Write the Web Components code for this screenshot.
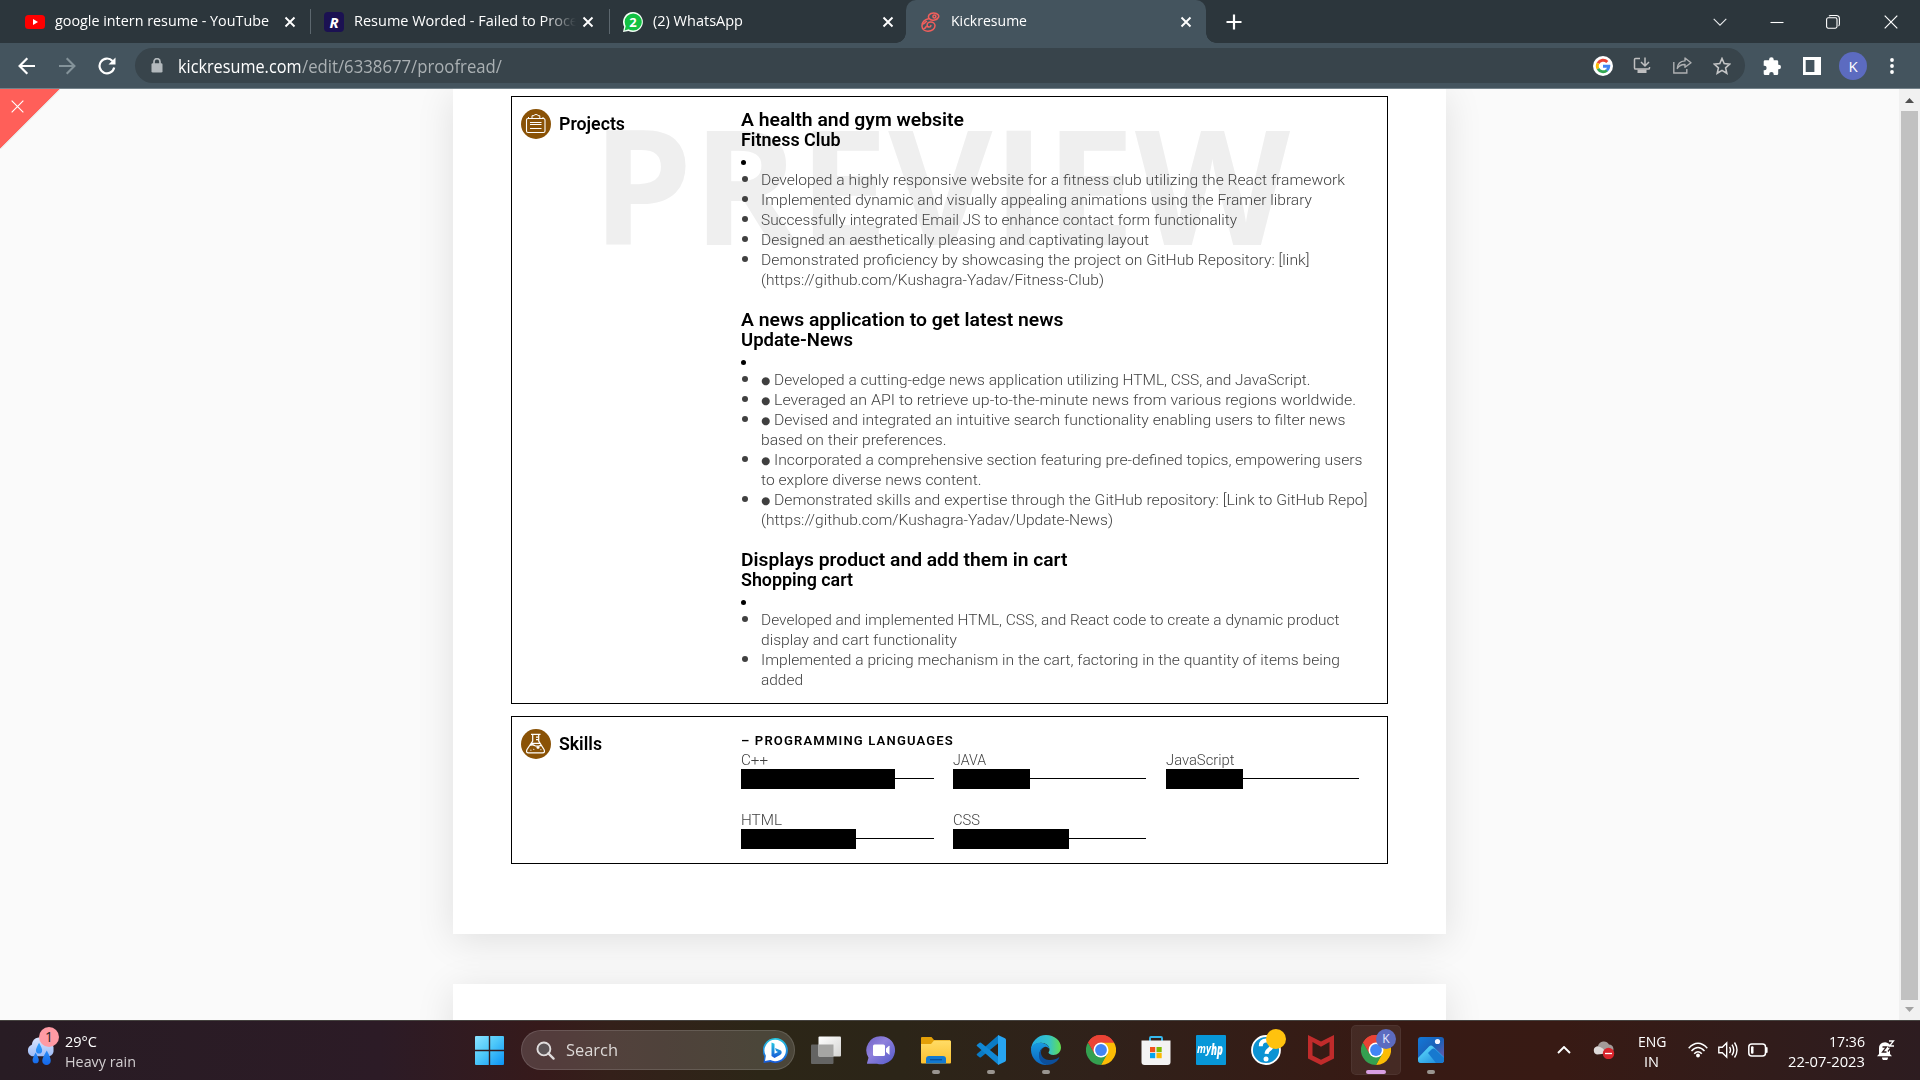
<!DOCTYPE html>
<html lang="en">
<head>
<meta charset="utf-8">
<title>Kickresume</title>
<style>
html,body{margin:0;height:100%;overflow:hidden}
body{display:flex;flex-direction:column;width:1920px;height:1080px;font-family:"Open Sans","Noto Sans",sans-serif;background:#fafafa}
</style>
</head>
<body>
<tab-strip></tab-strip>
<nav-toolbar></nav-toolbar>
<page-view></page-view>
<task-bar></task-bar>
<script>
const chromeLogo = `<path d="M15 15 2 7.500A15 15 0 0 1 28 7.500Z" fill="#ea4335"/><path d="M28 7.500A15 15 0 0 1 15 30L21 18 15 7.500Z" fill="#fbbc05"/><path d="M2 7.500A15 15 0 0 0 15 30L21.500 18.700 9 19Z" fill="#34a050"/><path d="M15 7.500h13A15 15 0 0 0 2 7.500L8.500 18.700Z" fill="#ea4335"/><circle cx="15" cy="15" r="7.500" fill="#fff"/><circle cx="15" cy="15" r="5.900" fill="#4285f4"/>`;
const ICONS = {
  x: ['0 0 12 12','<path d="M1.500 1.500l9 9M10.500 1.500l-9 9" stroke="#fff" stroke-width="1.900" fill="none"/>'],
  thinx: ['0 0 14 14','<path d="M.7.700l12.600 12.600M13.300.700.700 13.300" stroke="#fff" stroke-width="1.200" fill="none"/>'],
  youtube: ['0 0 20 20','<rect y="3" width="20" height="14" rx="3.500" fill="#f00"/><path d="M8 7v6l5-3z" fill="#fff"/>'],
  whatsapp: ['0 0 20 20','<path d="M10 0a10 10 0 1 1-4.500 19L0 20l1.200-5.200A10 10 0 0 1 10 0z" fill="#f4fff6"/><circle cx="10.200" cy="10" r="8.600" fill="#12c143"/><path d="M1.600 18.400l1.300-5 3.500 3.500z" fill="#12c143"/>'],
  kick: ['0 0 20 20','<g fill="none" stroke="#f25f5c" stroke-width="1.500" stroke-linecap="round"><path d="M16.500 6.500C19.500 4 16.500.800 12.500.900 8.500 1 6.500 4 8 6.500 2 8 .800 11.500 1 14.500c.2 3 3 4.700 6 4.700 4 0 7-2.500 7-5.400 0-2.400-2-3.900-4.300-3.900-2 0-3.600 1.400-3.600 3 0 1.200.900 2.100 2 2.100s1.800-.7 1.800-1.600"/><path d="M8 6.500c1.500 1.600 3.500 1.900 5.500 1.400 2-.2 2.500-.6 3-1.400M1.500 12c2 0 2.500-2 4-2.500M3 16.500c1.500-.2 2-1 2.200-2"/><circle cx="13.400" cy="4.400" r="1.500"/></g>'],
  plus: ['0 0 16 16','<path d="M8 .5v15M.5 8h15" stroke="#fff" stroke-width="2.200"/>'],
  chevdown: ['0 0 14 8','<path d="M.7.800 7 7.100 13.300.800" stroke="#e8eaec" stroke-width="1.100" fill="none"/>'],
  min: ['0 0 14 14','<path d="M.5 7.500h13" stroke="#fff" stroke-width="1.100"/>'],
  restore: ['0 0 14 14','<rect x=".6" y="2.800" width="10.400" height="10.400" rx="1.600" fill="none" stroke="#fff" stroke-width="1.100"/><path d="M3 1.200Q3.600.500 5 .5h5.200Q13.400.600 13.400 3.700V9q0 1.600-.9 2" fill="none" stroke="#fff" stroke-width="1.100"/>'],
  back: ['0 0 18 18','<path d="M17 9H2M9.300 1.300 1.600 9l7.700 7.700" fill="none" stroke="#fff" stroke-width="2.200"/>'],
  fwd: ['0 0 18 18','<path d="M1 9h15M8.700 1.300 16.400 9l-7.700 7.700" fill="none" stroke="#84939a" stroke-width="2.100"/>'],
  reload: ['0 0 18 18','<path d="M16.200 10.500A7.400 7.400 0 1 1 14.500 4" fill="none" stroke="#fff" stroke-width="2.200"/><path d="M17.500.600V7.500h-7z" fill="#fff"/>'],
  lock: ['0 0 12 15','<rect x=".5" y="5.300" width="11" height="9.200" rx="1.300" fill="#b3b9bd"/><path d="M3 6V3.700a3 3 0 0 1 6 0V6" stroke="#b3b9bd" stroke-width="1.700" fill="none"/>'],
  google: ['0 0 20 20','<circle cx="10" cy="10" r="10" fill="#fff"/><g fill="none" stroke-width="2.900"><path d="M5 7.200A5.800 5.800 0 0 1 14.300 6" stroke="#ea4335"/><path d="M5 12.800a5.800 5.800 0 0 1 0-5.600" stroke="#fbbc05"/><path d="M14 14.200a5.800 5.800 0 0 1-9-1.400" stroke="#34a853"/><path d="M10 10.200h5.800a5.800 5.800 0 0 1-2 4.200" stroke="#4285f4"/></g>'],
  install: ['0 0 18 18','<path d="M7 1.500H2.600Q1.500 1.500 1.500 2.600v8.300Q1.500 12 2.600 12h12.800q1.100 0 1.100-1.100V10" fill="none" stroke="#bfbfc0" stroke-width="1.500"/><path d="M4.500 12.500h9V16h-9z" fill="#bfbfc0"/><path d="M12 .5v8M8 5l4 4 4-4" fill="none" stroke="#bfbfc0" stroke-width="1.500"/>'],
  share: ['0 0 19 17','<path d="M.8 5v11h13v-4" fill="none" stroke="#aeb0b2" stroke-width="1.400"/><path d="M12 1l6 4.700-6 4.600V7.500C8 7.300 6 8.700 4.300 11.500 4.600 6.500 7.500 4.200 12 3.900z" fill="none" stroke="#aeb0b2" stroke-width="1.400" stroke-linejoin="round"/>'],
  star: ['0 0 18 18','<path d="M9 1.500l2.200 5.100 5.600.5-4.200 3.700 1.200 5.500L9 13.400l-4.800 2.900 1.200-5.500L1.200 7.100l5.600-.5z" fill="none" stroke="#c4c5c6" stroke-width="1.600"/>'],
  puzzle: ['0 0 18 18','<path d="M6.100 3.300V2.500a2.300 2.300 0 0 1 4.600 0v.8h3.200q1.300 0 1.300 1.300v3.200h.6a2.200 2.200 0 0 1 0 4.400h-.6v4.500q0 1.300-1.300 1.300h-3.200v-.8a2.200 2.200 0 0 0-4.500 0v.8H2q-1.300 0-1.300-1.300v-3.400h.7a2.200 2.200 0 0 0 0-4.500H.7V4.600Q.7 3.300 2 3.300z" fill="#fff"/>'],
  panel: ['0 0 18 18','<path d="M0 0h18v18H0zM2.700 2.900v12.200h8.700V2.900z" fill="#fff" fill-rule="evenodd"/>'],
  kebab: ['0 0 4 16','<circle cx="2" cy="2" r="1.900" fill="#fff"/><circle cx="2" cy="8" r="1.900" fill="#fff"/><circle cx="2" cy="14" r="1.900" fill="#fff"/>'],
  case: ['0 0 30 30','<circle cx="15" cy="15" r="15" fill="#8a5206"/><g fill="none" stroke="#fff" stroke-width="1.100"><rect x="5.500" y="9.500" width="18.500" height="14" rx="1.500"/><path d="M7.500 9V8M22 9V8M11 9V6.700h2q0-1.200 2-1.200t2 1.200h1.800V9M9 13.500h11.500M9 15.500h11.500M9 19.500h11.500" stroke-width="1"/></g>'],
  flask: ['0 0 30 30','<circle cx="15" cy="15" r="15" fill="#8a5206"/><path d="M10 5.400h9.500M11.700 5.500v6.500L6 20.500q-1.500 3.300 1.500 3.300h14q3 0 1.500-3.300L17.700 12V5.500M15 8h2.500M15 10.500h2.500M10 14.300h9.500M8.500 16.500q3-1.500 5 0t6.500-.2M13 20l-.5.700M17 17v3M15.500 18.500h3M10.300 21.300l-.8-.1M19.500 20.500h.8" fill="none" stroke="#fff" stroke-width="1.250"/>'],
  weather: ['0 0 32 30','<defs><linearGradient id="c" x2="0" y2="1"><stop stop-color="#dbe6ff"/><stop offset="1" stop-color="#9dbcf7"/></linearGradient><linearGradient id="d" x2="0" y2="1"><stop stop-color="#35a3ff"/><stop offset="1" stop-color="#1567ea"/></linearGradient></defs><path d="M7 21a6.500 6.500 0 0 1 0-12A8.500 8.500 0 0 1 23 6a7 7 0 0 1 6.500 8.500A5.800 5.800 0 0 1 25 21z" fill="url(#c)"/><path d="M14.500 7q-3.500 6.500-3.200 8a3.200 3.200 0 0 0 6.400 0q.3-1.500-3.200-8zM11 17q-3.500 6.500-3.200 8a3.200 3.200 0 0 0 6.400 0q.3-1.500-3.200-8zM22.500 15q-5 8.500-4.700 10.500a4.400 4.400 0 0 0 8.800 0Q27 23.500 22.500 15z" fill="url(#d)"/>'],
  windows: ['0 0 29 29','<defs><linearGradient id="w" x2="1" y2="1"><stop stop-color="#8ce3ff"/><stop offset=".45" stop-color="#4fc9fa"/><stop offset="1" stop-color="#0b93f5"/></linearGradient></defs><path d="M1 0h12.800v13.800H0V1Q0 0 1 0zM15.200 0H28q1 0 1 1v12.800H15.200zM0 15.200h13.800V29H1q-1 0-1-1zM15.200 15.200H29V28q0 1-1 1H15.200z" fill="url(#w)"/>'],
  mag: ['0 0 20 20','<circle cx="8.300" cy="8.300" r="6.800" fill="#5c5557" stroke="#e0dddd" stroke-width="2"/><path d="M13 13l5.500 5.500" stroke="#e0dddd" stroke-width="2.400" stroke-linecap="round"/>'],
  bing: ['0 0 25 25','<defs><linearGradient id="b" x2="0" y2="1"><stop stop-color="#25c6df"/><stop offset="1" stop-color="#1758d8"/></linearGradient></defs><path d="M12.500 0a12.500 12.500 0 1 1-5 24L.5 25l.8-6.500A12.500 12.500 0 0 1 12.500 0z" fill="url(#b)"/><path d="M12.500 1.800A10.700 10.700 0 1 1 7.300 22L2 23l.9-5.200A10.700 10.700 0 0 1 12.500 1.800z" fill="#fff"/><path d="M8.500 4.500l3 1.200v10L15 14l-2-1-1-3 6 2.600q1.800 2.500-1 4.500L11.500 20l-3-2z" fill="url(#b)"/>'],
  taskview: ['0 0 30 30','<defs><linearGradient id="a" x2="1" y2="1"><stop stop-color="#fff"/><stop offset="1" stop-color="#d4d4d2"/></linearGradient></defs><rect y="9.500" width="22.500" height="19.500" rx="1" fill="#646463"/><rect x="7.500" y="1.500" width="22.500" height="20" rx="1" fill="url(#a)"/><path d="M7.500 9.500h15v12h-15z" fill="#a5a5a3"/>'],
  chat: ['0 0 30 30','<defs><linearGradient id="t" x2="1" y2="1"><stop stop-color="#6e62c6"/><stop offset=".4" stop-color="#8f80dc"/><stop offset="1" stop-color="#5259c9"/></linearGradient></defs><path d="M15 1.300a14 14 0 1 1-4 27.400H1.700q-1 0-.6-1l1.400-5A14 14 0 0 1 15 1.300z" fill="url(#t)"/><rect x="7" y="9.500" width="12" height="11.500" rx="1.500" fill="#fff"/><path d="M20 13.500l3-2.700q.5-.3.500.4v8q0 .8-.5.400l-3-2.700z" fill="#fff"/>'],
  folder: ['0 0 30 30','<defs><linearGradient id="f" x2="0" y2="1"><stop stop-color="#ffdc66"/><stop offset="1" stop-color="#fbc02f"/></linearGradient></defs><path d="M1 2h9.500L13 5h16v6H0V3q0-1 1-1z" fill="#e3a008"/><path d="M0 9h10l3-3.500h16q1 0 1 1v21q0 1-1 1H1q-1 0-1-1z" fill="url(#f)"/><path d="M5 28.500V24q0-3 3-3h14q3 0 3 3v4.500z" fill="#1279cf"/><path d="M9 24.700h12" stroke="#08509a" stroke-width="1.300"/>'],
  vscode: ['0 0 30 30','<path d="M1.300 20.500l2.200 1.800q.8.400 1.500-.1L22.500 8V0L.9 19q-.8.700.4 1.500z" fill="#0a7bc5"/><path d="M1.300 9.500l2.200-1.800Q4.300 7.300 5 7.800L22.500 22v8L.9 11q-.8-.7.400-1.500z" fill="#1188d5"/><path d="M22 0l7 3.200q1 .5 1 1.800v20q0 1.300-1 1.800L22 30z" fill="#27a5f2"/>'],
  edge: ['0 0 30 30','<defs><linearGradient id="e" x2="1"><stop stop-color="#23aee5"/><stop offset=".6" stop-color="#35c3c8"/><stop offset="1" stop-color="#63e04e"/></linearGradient><linearGradient id="g" x2="0" y2="1"><stop stop-color="#189ae0"/><stop offset="1" stop-color="#0b66bf"/></linearGradient></defs><path d="M0 15A15 15 0 0 1 15 0c8.500 0 15 5.700 15 12.500 0 4.500-3.500 7.500-7.500 7.500-3.500 0-5-1.300-5-2.400 0-.7 1-1.200 1-3.100C18.500 11 15 7.800 10 7.800 5 7.800 1 11 0 15z" fill="url(#e)"/><path d="M0 15c0-5 4.500-7.200 9-7.200 5.500 0 9.500 3.200 9.500 6.700-1-2-3-3-5-2.500C10 13 7.500 17 9 22c1.200 4 4.500 7.300 8.500 7.800A15 15 0 0 1 0 15z" fill="url(#g)"/><path d="M13 12.200c-5.500 3.300-3.500 12 5 12.800 4 .3 7.500-.8 9.500-2.500.5-.4 1 .1.700.600C25.500 28 20.500 30 16.500 30 11 29.500 7.500 24.500 8 20c.3-3.500 2-6.500 5-7.800z" fill="#0c4f9b"/>'],
  chrome: ['0 0 30 30',chromeLogo],
  store: ['0 0 30 30','<path d="M9 6.500V3q0-1 1-1h10q1 0 1 1v3.500" fill="none" stroke="#36b9ee" stroke-width="1.900"/><path d="M.5 5.500h29V27q0 3-3 3h-23q-3 0-3-3z" fill="#f3f3f3"/><path d="M9 12h5.200v5.200H9z" fill="#f1511b"/><path d="M15.500 12h5.200v5.200h-5.200z" fill="#80bb03"/><path d="M9 18h5.200v5.200H9z" fill="#04a4ee"/><path d="M15.500 18h5.200v5.200h-5.200z" fill="#fbb901"/>'],
  blue: ['0 0 30 30','<rect width="30" height="30" rx="1" fill="#0797d8"/>'],
  help: ['0 0 30 30','<circle cx="15" cy="15" r="14" fill="#0c93d4" stroke="#fff" stroke-width="1.800"/><path d="M9.800 11.200q0-5.600 5.500-5.600 5.400 0 5.400 4.600 0 2.700-2.700 4.400-2.300 1.500-2.400 4.300" fill="none" stroke="#fff" stroke-width="4"/><circle cx="15" cy="24" r="2.500" fill="#fff"/>'],
  mcafee: ['0 0 30 30','<path d="M2 0l13 6.500L28 0v23.500L15 30 2 23.500zM6.500 7v13.500l8.500 4.300 8.500-4.300V7L15 11.800z" fill="#c02b2b" fill-rule="evenodd"/>'],
  photos: ['0 0 30 30','<defs><linearGradient id="p" x2="1" y2="1"><stop stop-color="#1379d8"/><stop offset=".5" stop-color="#1a60b8"/><stop offset="1" stop-color="#7b58a8"/></linearGradient><linearGradient id="q" x2="1" y2="1"><stop stop-color="#65e5ff"/><stop offset="1" stop-color="#1680d8"/></linearGradient></defs><rect x="2" y="2" width="26" height="26" rx="3" fill="url(#p)"/><path d="M2 23l11-11.500q2-2 4 0L28 22v3q0 3-3 3H5q-3 0-3-3z" fill="url(#q)"/><path d="M12 18l4-4q1.500-1 3 0l9 9v2q0 3-3 3h-5z" fill="#1779cf"/><circle cx="21.500" cy="6.500" r="2.600" fill="#f4f5ff"/>'],
  up: ['0 0 14 8','<path d="M1 7l6-6 6 6" fill="none" stroke="#fff" stroke-width="1.900"/>'],
  cloud: ['0 0 22 18','<path d="M4 13a4.500 4.500 0 0 1 1-8A6 6 0 0 1 16 3.500 4.500 4.500 0 0 1 18 12z" fill="#a29b99"/><path d="M4 13.500a4.200 4.200 0 0 1-.5-8Q9 4.500 14 12.500z" fill="#ded9d8"/><circle cx="15.500" cy="12.500" r="5.700" fill="#d9252d"/><path d="M12 12.500h7" stroke="#fff" stroke-width="1.300"/>'],
  wifi: ['0 0 20 16','<g fill="none" stroke="#fff" stroke-width="1.500"><path d="M.7 6.200Q10-3.500 19.300 6.200M3.500 9Q10 2 16.500 9M6.200 11.700q3.800-4 7.600 0"/></g><circle cx="10" cy="13.500" r="1.900" fill="#fff"/>'],
  volume: ['0 0 20 18','<g fill="none" stroke="#fff" stroke-width="1.400"><path d="M.8 6.200h3.500L8.700 2v14l-4.400-4.200H.8zM11.500 6q2 3 0 6M14 3.700q3.500 5.300 0 10.600M16.500 1.500q5 7.500 0 15"/></g>'],
  battery: ['0 0 20 14','<rect x=".8" y="1" width="16.700" height="12" rx="3" fill="none" stroke="#fff" stroke-width="1.500"/><rect x="3" y="3.300" width="2.500" height="7.400" rx="1" fill="#fff"/><path d="M18.700 5v4" stroke="#fff" stroke-width="1.800" stroke-linecap="round"/>'],
  bell: ['0 0 18 20','<path d="M2 14V8.500a6 6 0 0 1 10-4.700L13 5v9l2 2.300H0z" fill="#fff"/><path d="M5 17.500h6a3 3 0 0 1-6 0z" fill="#fff"/><path d="M5.500 7h4l-4 5h4M11 7h3.500L11 11.500" stroke="#2f1d1e" stroke-width="1.300" fill="none"/><path d="M12 1h4.500L12.500 6H17" stroke="#fff" stroke-width="1.300" fill="none"/>'],
  arrowup: ['0 0 9 5','<path d="M0 5 4.500 0 9 5z" fill="#505050"/>'],
  arrowdown: ['0 0 9 5','<path d="M0 0h9L4.500 5z" fill="#a3a3a3"/>']
};
class Base extends HTMLElement{
  connectedCallback(){ if(this.shadowRoot) return;
    this.attachShadow({mode:'open'}).innerHTML=this.view(); }
}
const a=(el,n,d='')=>el.getAttribute(n)??d;

customElements.define('ui-icon',class extends Base{
  view(){const [vb,body]=ICONS[a(this,'name')];const w=a(this,'w'),h=a(this,'h',w);
  return `<style>:host{display:block;flex:none;width:${w}px;height:${h}px}svg{display:block}</style><svg width="${w}" height="${h}" viewBox="${vb}">${body}</svg>`}
});

customElements.define('browser-tab',class extends Base{
  view(){return `<style>
  :host{display:flex;align-items:center;box-sizing:border-box;height:43px;position:relative;color:#fff;font-size:14.500px}
  .t{flex:1;margin-left:10px;overflow:hidden;line-height:42px;height:43px}
  :host([fade]) .t{-webkit-mask:linear-gradient(90deg,#000 190px,transparent 222px)}
  :host([on]){background:#44545e;border-radius:10px 10px 0 0}
  :host([on])::before,:host([on])::after{content:"";position:absolute;bottom:0;width:10px;height:10px}
  :host([on])::before{left:-10px;background:radial-gradient(circle at 0 0,transparent 9.500px,#44545e 10px)}
  :host([on])::after{right:-10px;background:radial-gradient(circle at 100% 0,transparent 9.500px,#44545e 10px)}
  </style><slot name="icon"></slot><div class="t"><slot></slot></div><ui-icon name="x" w="12"></ui-icon>`}
});

customElements.define('tab-strip',class extends Base{
  view(){return `<style>
  :host{display:flex;height:43px;flex:none;background:#2c363c;align-items:center}
  .sep{width:1px;height:25px;background:#5c676e}
  .r{width:20px;height:20px;border-radius:4px;background:#1b1152;color:#fff;font:italic 700 15px/20px "Open Sans",sans-serif;text-align:center}
  .wa{display:grid;width:20px;height:20px}.wa>*{grid-area:1/1}.wa b{color:#fff;font-size:13px;line-height:20px;text-align:center;z-index:1}
  .plus{margin-left:20px}
  .win{margin-left:auto;display:flex;align-items:center;height:37px;padding-right:22px}
  </style>
  <browser-tab style="width:310px;padding:0 14px 0 25px"><ui-icon slot="icon" name="youtube" w="20"></ui-icon><fit-text w="214">google intern resume - YouTube</fit-text></browser-tab><div class="sep"></div>
  <browser-tab fade style="width:298px;padding:0 15px 0 13px"><div slot="icon" class="r">R</div><fit-text w="224">Resume Worded - Failed to Proce</fit-text></browser-tab><div class="sep"></div>
  <browser-tab style="width:296px;padding:0 12px 0 13px"><div slot="icon" class="wa"><ui-icon name="whatsapp" w="20"></ui-icon><b>2</b></div><fit-text w="90">(2) WhatsApp</fit-text></browser-tab>
  <browser-tab on style="width:300px;padding:0 14px 0 15px"><ui-icon slot="icon" name="kick" w="20"></ui-icon><fit-text w="76">Kickresume</fit-text></browser-tab>
  <ui-icon class="plus" name="plus" w="16"></ui-icon>
  <div class="win"><ui-icon name="chevdown" w="14" h="8"></ui-icon><ui-icon name="min" w="14" style="margin-left:43px"></ui-icon><ui-icon name="restore" w="14" style="margin-left:42px"></ui-icon><ui-icon name="thinx" w="14" style="margin-left:44px"></ui-icon></div>`}
});

customElements.define('nav-toolbar',class extends Base{
  view(){return `<style>
  :host{display:flex;height:46px;flex:none;box-sizing:border-box;background:#44545e;border-bottom:1px solid #74828a;align-items:center;padding-left:18px}
  .nav{display:flex;gap:22px;width:117px}
  .box{width:1610px;height:35px;border-radius:18px;background:#38444b;display:flex;align-items:center;font-size:17.500px;color:#aab0b3;line-height:34px}
  .box>ui-icon:first-child{margin:0 15px 0 16px}
  .url{display:flex}.url b{font-weight:400;color:#fff}
  .acts{margin-left:auto;display:flex;align-items:center;padding-right:14px}
  .end{display:flex;align-items:center;margin-left:18px}
  .k{width:28px;height:28px;border-radius:50%;background:#5c6bc0;color:#fff;text-align:center;font-size:15px;line-height:28px;margin:0 23px 0 18px}
  </style>
  <div class="nav"><ui-icon name="back" w="18"></ui-icon><ui-icon name="fwd" w="18"></ui-icon><ui-icon name="reload" w="18"></ui-icon></div>
  <div class="box"><ui-icon name="lock" w="12" h="15"></ui-icon><div class="url"><b><fit-text w="123.500">kickresume.com</fit-text></b><fit-text w="200">/edit/6338677/proofread/</fit-text></div>
  <div class="acts"><ui-icon name="google" w="20"></ui-icon><ui-icon name="install" w="18" style="margin-left:20px"></ui-icon><ui-icon name="share" w="19" h="17" style="margin-left:22px"></ui-icon><ui-icon name="star" w="18" style="margin-left:21px"></ui-icon></div></div>
  <div class="end"><ui-icon name="puzzle" w="18"></ui-icon><ui-icon name="panel" w="18" style="margin-left:22px"></ui-icon><div class="k">K</div><ui-icon name="kebab" w="4" h="16"></ui-icon></div>`}
});

customElements.define('resume-card',class extends Base{
  view(){return `<style>
  :host{display:flex;box-sizing:border-box;width:877px;border:1px solid #000;position:relative;padding:13px 0 0 9px}
  .l{width:220px;display:flex;gap:8px;height:30px;align-items:center;flex:none;margin-top:-1px}
  .l b{font:600 17.500px/30px Roboto,sans-serif}
  .r{flex:1;position:relative}
  </style><slot name="mark"></slot><div class="l"><ui-icon name="${a(this,'icon')}" w="30"></ui-icon><b><fit-text w="${a(this,'w')}">${a(this,'label')}</fit-text></b></div><div class="r"><slot></slot></div>`}
});

customElements.define('resume-entry',class extends Base{
  view(){return `<style>
  :host{display:block;margin-bottom:20px;font-family:Roboto,sans-serif;line-height:20px}
  h3,h4{margin:0;height:20px;font-weight:600;color:#000}h3{font-size:18.500px}h4{font-size:17.500px}
  .d{height:20px;display:flex;align-items:center}.d i{width:5px;height:5px;border-radius:50%;background:#000;margin-top:5px}
  </style><h3><fit-text w="${a(this,'tw')}">${a(this,'title-text')}</fit-text></h3><h4><fit-text w="${a(this,'sw')}">${a(this,'sub')}</fit-text></h4><div class="d"><i></i></div><slot></slot>`}
});

customElements.define('resume-point',class extends Base{
  view(){const inner=this.hasAttribute('inner');
  return `<style>
  :host{display:flex;font:300 15.200px/20px Roroto,Roboto,sans-serif;color:#3f3f3f}
  i{width:6px;height:6px;border-radius:50%;background:#404040;margin:6px 13px 0 1px;flex:none}
  .x{display:flex;flex-direction:column}.row{display:flex;height:20px}
  .b{width:13px;font:17px/20px "DejaVu Sans",sans-serif;text-indent:0}
  .b span{display:inline-block;transform:scale(.62);transform-origin:0 58%;margin-left:0}
  </style><i></i><div class="x">${a(this,'lines').split('|').map((l,n)=>{const [t,w]=l.split('~');
    return `<div class="row">${inner&&!n?'<div class="b"><span>●</span></div>':''}<fit-text w="${w}">${t}</fit-text></div>`}).join('')}</div>`}
});

customElements.define('skill-meter',class extends Base{
  view(){return `<style>
  :host{display:block;width:192.500px;height:40px;font:300 15.200px/20px Roboto,sans-serif;color:#3f3f3f}
  .n{height:19px}.bar{height:20px;display:flex}
  .f{background:#000;width:${a(this,'level')}px}.t{flex:1;height:1px;background:#000;margin-top:9px}
  </style><div class="n"><fit-text w="${a(this,'w')}">${a(this,'name')}</fit-text></div><div class="bar"><div class="f"></div><div class="t"></div></div>`}
});

customElements.define('page-view',class extends Base{
  view(){return `<style>
  :host{display:flex;height:931px;flex:none;overflow:hidden;position:relative;background:#fafafa}
  .doc{flex:1;display:flex;flex-direction:column;align-items:center;gap:50px}
  .paper{width:993px;background:#fff;box-shadow:0 6px 36px rgba(0,0,0,.11);box-sizing:border-box;flex:none}
  .one{height:845px;padding:7px 0 0 58px;display:flex;flex-direction:column;gap:12px}
  .two{height:200px}
  .mark{position:absolute;left:80px;top:0;font:700 160px/218px "Open Sans",sans-serif;color:#efefef;margin-top:-23px;height:218px}
  .tri{position:absolute;left:0;top:0;width:60px;height:60px;background:linear-gradient(135deg,#ff5f59 0 49.300%,#e6e0df 50%,transparent 51.500%)}
  .tri ui-icon{margin:11px 0 0 11px}
  .grid{display:grid;grid-template-columns:192px 193px 192px;column-gap:20px;row-gap:20px}
  .pl{font:600 13.500px/20px Roboto,sans-serif;height:20px;margin-top:0}
  .sb{width:21px;background:#f1f1f1;display:flex;flex-direction:column;align-items:center;padding:9px 0 8px;box-sizing:border-box;justify-content:space-between}
  .th{width:17px;height:889px;background:#c1c1c1}
  resume-entry:last-of-type{margin-bottom:0}
  </style>
  <div class="doc"><div class="paper one">
  <resume-card icon="case" label="Projects" w="66" style="height:608px"><div slot="mark" class="mark"><fit-text w="698">PREVIEW</fit-text></div>
   <resume-entry title-text="A health and gym website" tw="223" sub="Fitness Club" sw="99.500">
    <resume-point lines="Developed a highly responsive website for a fitness club utilizing the React framework~584"></resume-point>
    <resume-point lines="Implemented dynamic and visually appealing animations using the Framer library~551"></resume-point>
    <resume-point lines="Successfully integrated Email JS to enhance contact form functionality~476"></resume-point>
    <resume-point lines="Designed an aesthetically pleasing and captivating layout~388"></resume-point>
    <resume-point lines="Demonstrated proficiency by showcasing the project on GitHub Repository: [link]~548.500|(https://github.com/Kushagra-Yadav/Fitness-Club)~343"></resume-point>
   </resume-entry>
   <resume-entry title-text="A news application to get latest news" tw="322.500" sub="Update-News" sw="112">
    <resume-point inner lines="Developed a cutting-edge news application utilizing HTML, CSS, and JavaScript.~536.500"></resume-point>
    <resume-point inner lines="Leveraged an API to retrieve up-to-the-minute news from various regions worldwide.~582"></resume-point>
    <resume-point inner lines="Devised and integrated an intuitive search functionality enabling users to filter news~571.500|based on their preferences.~185.500"></resume-point>
    <resume-point inner lines="Incorporated a comprehensive section featuring pre-defined topics, empowering users~588.500|to explore diverse news content.~220.500"></resume-point>
    <resume-point inner lines="Demonstrated skills and expertise through the GitHub repository: [Link to GitHub Repo]~593.500|(https://github.com/Kushagra-Yadav/Update-News)~352"></resume-point>
   </resume-entry>
   <resume-entry title-text="Displays product and add them in cart" tw="326.500" sub="Shopping cart" sw="112">
    <resume-point lines="Developed and implemented HTML, CSS, and React code to create a dynamic product~578.500|display and cart functionality~196"></resume-point>
    <resume-point lines="Implemented a pricing mechanism in the cart, factoring in the quantity of items being~579|added~42"></resume-point>
   </resume-entry>
  </resume-card>
  <resume-card icon="flask" label="Skills" w="43" style="height:148px">
   <div class="pl"><fit-text w="213" sp="1.200">– PROGRAMMING LANGUAGES</fit-text></div>
   <div class="grid">
    <skill-meter name="C++" w="27" level="154"></skill-meter><skill-meter name="JAVA" w="33" level="77"></skill-meter><skill-meter name="JavaScript" w="68.500" level="77"></skill-meter>
    <skill-meter name="HTML" w="41" level="115"></skill-meter><skill-meter name="CSS" w="27" level="116"></skill-meter>
   </div>
  </resume-card>
  </div><div class="paper two"></div></div>
  <div class="sb"><ui-icon name="arrowup" w="9" h="5"></ui-icon><div class="th"></div><ui-icon name="arrowdown" w="9" h="5"></ui-icon></div>
  <div class="tri"><ui-icon name="thinx" w="13"></ui-icon></div>`}
});

customElements.define('task-icon',class extends Base{
  view(){return `<style>
  :host{display:flex;width:55px;height:60px;align-items:center;justify-content:center;position:relative}
  .c{width:50px;height:50px;border-radius:5px;display:flex;align-items:center;justify-content:center;box-sizing:border-box}
  :host([active]) .c{background:rgba(255,255,255,.07);border:1px solid rgba(255,255,255,.05)}
  :host([open])::after{content:"";position:absolute;bottom:6px;left:50%;width:8px;height:4px;margin-left:-4px;border-radius:2px;background:#9a9590}
  :host([active])::after{width:20px;margin-left:-10px;background:#d99fe2}
  .o{position:absolute;left:0;top:0;width:55px;height:60px}
  </style><div class="c"><ui-icon name="${a(this,'name')}" w="30"></ui-icon></div><div class="o"><slot></slot></div>`}
});

customElements.define('task-bar',class extends Base{
  view(){return `<style>
  :host{display:flex;height:60px;flex:none;box-sizing:border-box;box-shadow:inset 0 1px #45423f;color:#fff;font-size:15px;align-items:center;
  background:linear-gradient(90deg,#281c24 0,#2c1b26 380px,#361a1b 540px,#34201a 610px,#2c2617 760px,#2c2518 900px,#30211a 1100px,#371a14 1370px,#381a14 1560px,#321c1a 1740px,#2d1c20 1920px)}
  .wx{display:flex;width:450px;padding-left:25px;gap:9px;align-items:center;position:relative}
  .wx .tx{line-height:20px;color:#d2ced0}.tx div{height:20px}.wx .tx div:first-child{color:#fff}
  .bd{position:absolute;left:39px;top:-3px;width:20px;height:20px;border-radius:50%;background:#ff9aa4;color:#222;text-align:center;line-height:20px;font-size:14px}
  .s{width:274px;height:40px;box-sizing:border-box;margin:0 3px 0 17px;border:1px solid rgba(255,255,255,.13);border-radius:20px;background:rgba(255,255,255,.15);display:flex;align-items:center;padding:0 6px 0 14px;color:#ddd9d7;font-size:16px;line-height:36px}
  .s fit-text{margin-left:11px}.s ui-icon:last-child{margin-left:auto}
  .apps{display:flex}
  .hp{position:absolute;left:14px;top:19px;font:italic 700 12px/20px "Open Sans",sans-serif;display:flex;align-items:center}
  .hp b{font-size:15px}
  .dot{position:absolute;left:28px;top:9px;width:20px;height:20px;border-radius:50%;background:#ffc20e;text-align:center;font-size:12px;line-height:20px;color:#e6e8ff}
  .tray{display:flex;align-items:center;margin-left:auto;padding-right:25px}
  .tray .tx{line-height:21px}.tray .tx div{height:20px;text-align:center}
  .tx{margin-top:1px}
  .tray .clock div{text-align:right}
  </style>
  <div class="wx"><ui-icon name="weather" w="31" h="29"></ui-icon><div class="bd">1</div><div class="tx"><div><fit-text w="32">29°C</fit-text></div><div><fit-text w="71">Heavy rain</fit-text></div></div></div>
  <ui-icon name="windows" w="29"></ui-icon>
  <div class="s"><ui-icon name="mag" w="19"></ui-icon><fit-text w="52">Search</fit-text><ui-icon name="bing" w="25"></ui-icon></div>
  <div class="apps"><task-icon name="taskview"></task-icon><task-icon name="chat"></task-icon><task-icon name="folder" open></task-icon><task-icon name="vscode" open></task-icon><task-icon name="edge" open></task-icon><task-icon name="chrome"></task-icon><task-icon name="store"></task-icon>
  <task-icon name="blue"><div class="hp"><fit-text w="14">my</fit-text><b><fit-text w="12">hp</fit-text></b></div></task-icon>
  <task-icon name="help"><div class="dot"></div></task-icon><task-icon name="mcafee"></task-icon>
  <task-icon name="chrome" open active><div class="dot" style="background:#5c6bc0">K</div></task-icon><task-icon name="photos" open></task-icon></div>
  <div class="tray"><ui-icon name="up" w="14" h="8"></ui-icon><ui-icon name="cloud" w="22" h="18" style="margin-left:22px"></ui-icon>
  <div class="tx" style="margin-left:23px"><div><fit-text w="28.500">ENG</fit-text></div><div><fit-text w="15">IN</fit-text></div></div>
  <ui-icon name="wifi" w="20" h="16" style="margin-left:22px"></ui-icon><ui-icon name="volume" w="20" h="18" style="margin-left:10px"></ui-icon><ui-icon name="battery" w="20" h="14" style="margin-left:10px"></ui-icon>
  <div class="tx clock" style="margin-left:20px"><div><fit-text w="36">17:36</fit-text></div><div><fit-text w="77">22-07-2023</fit-text></div></div>
  <ui-icon name="bell" w="18" h="20" style="margin-left:12px"></ui-icon></div>`}
});

/* One line of text, condensed or stretched horizontally to the width in "w". */
customElements.define('fit-text',class extends Base{
  view(){return `<style>:host{display:inline-block;vertical-align:top;white-space:nowrap;width:${a(this,'w')}px}span{display:inline-block;transform-origin:0 50%;letter-spacing:${a(this,'sp',0)}px}</style><span><slot></slot></span>`}
  connectedCallback(){super.connectedCallback();
    const s=this.shadowRoot.querySelector('span');s.style.transform='';
    const n=s.getBoundingClientRect().width;
    if(n) s.style.transform=`scaleX(${parseFloat(a(this,'w'))/n})`;}
});
</script>
</body>
</html>
